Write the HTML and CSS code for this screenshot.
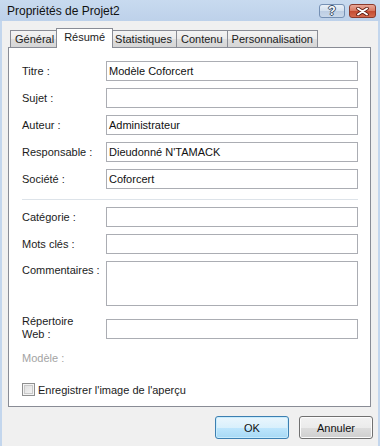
FILE: index.html
```html
<!DOCTYPE html>
<html lang="fr">
<head>
    <meta charset="UTF-8">
    <title>Propriétés de Projet2</title>
    <link rel="stylesheet" href="styles.css">
</head>
<body>
    <div class="window">
        <div class="titlebar">
            <span class="title">Propriétés de Projet2</span>
            <div class="caption-buttons">
                <span class="cap-btn help">?</span>
                <span class="cap-btn close">
                    <svg width="13" height="9" viewBox="0 0 13 9">
                        <path d="M2 1.5 L11 7.5 M11 1.5 L2 7.5" stroke="#5a1a10" stroke-width="3.6" stroke-linecap="round"/>
                        <path d="M2 1.5 L11 7.5 M11 1.5 L2 7.5" stroke="#ffffff" stroke-width="2" stroke-linecap="round"/>
                    </svg>
                </span>
            </div>
        </div>

        <div class="frame">
            <div class="tabs">
                <span class="tab">Général</span>
                <span class="tab active">Résumé</span>
                <span class="tab">Statistiques</span>
                <span class="tab">Contenu</span>
                <span class="tab">Personnalisation</span>
            </div>

            <div class="panel">
                <div class="form">
                    <label>Titre :</label>
                    <div class="field">Modèle Coforcert</div>
                    <label>Sujet :</label>
                    <div class="field"></div>
                    <label>Auteur :</label>
                    <div class="field">Administrateur</div>
                    <label>Responsable :</label>
                    <div class="field">Dieudonné N'TAMACK</div>
                    <label>Société :</label>
                    <div class="field">Coforcert</div>
                </div>

                <div class="separator"></div>

                <div class="form">
                    <label>Catégorie :</label>
                    <div class="field"></div>
                    <label>Mots clés :</label>
                    <div class="field"></div>
                    <label class="top">Commentaires :</label>
                    <div class="field area"></div>
                </div>

                <div class="form web-row">
                    <label class="two-lines">Répertoire<br>Web :</label>
                    <div class="field"></div>
                </div>

                <div class="disabled">Modèle :</div>

                <div class="check-row">
                    <span class="checkbox"></span>
                    <span>Enregistrer l'image de l'aperçu</span>
                </div>
            </div>

            <div class="buttons">
                <button class="btn default">OK</button>
                <button class="btn">Annuler</button>
            </div>
        </div>
    </div>
</body>
</html>
```

FILE: styles.css
```css
* {
    box-sizing: border-box;
}

body {
    margin: 0;
    font-family: "Liberation Sans", Arial, sans-serif;
    font-size: 11px;
    color: #1b1b1b;
}

.window {
    width: 380px;
    height: 446px;
    display: flex;
    flex-direction: column;
    background: #c3d6ed;
}

/* title bar */
.titlebar {
    height: 21px;
    display: flex;
    align-items: center;
    justify-content: space-between;
    padding: 0 4px 0 7px;
    background: linear-gradient(#c8daef, #bdd1ea);
}

.title {
    font-size: 12px;
    color: #111;
}

.caption-buttons {
    display: flex;
    gap: 4px;
    margin-top: 1px;
}

.cap-btn {
    width: 26px;
    height: 14px;
    border-radius: 3px;
    display: flex;
    align-items: center;
    justify-content: center;
}

.help {
    border: 1px solid #7590b4;
    background: linear-gradient(#e9f0f8, #d2dfee 50%, #bccde3 50%, #c9d8ea);
    color: #fff;
    font-weight: bold;
    font-size: 12px;
    text-shadow: 0 0 1px #3b4f6b, 1px 0 0 #3b4f6b, -1px 0 0 #3b4f6b, 0 1px 0 #3b4f6b, 0 -1px 0 #3b4f6b;
}

.close {
    width: 27px;
    border: 1px solid #8b3a2c;
    background: linear-gradient(#e8a899, #d8775f 50%, #c34a30 50%, #d46a4e);
}

/* frame */
.frame {
    flex: 1;
    margin: 0 2px;
    background: #f0f0f0;
}

.tabs {
    display: flex;
    align-items: flex-end;
    height: 19px;
    margin: 7px 0 0 6px;
    padding-left: 3px;
}

.tab {
    height: 17px;
    line-height: 16px;
    padding: 0 4px;
    margin-left: -1px;
    border: 1px solid #898c95;
    border-bottom: 0;
    background: linear-gradient(#f3f3f3, #ebebeb 50%, #dedede 50%, #d6d6d6);
    color: #1b1b1b;
}

.tab.active {
    height: 20px;
    line-height: 16px;
    padding: 0 7px;
    margin: 0 -2px -1px -3px;
    background: #fff;
    position: relative;
    z-index: 1;
}

.panel {
    height: 360px;
    margin: 0 7px 0 6px;
    border: 1px solid #898c95;
    background: #fff;
    padding: 13px 12px 0 13px;
}

.form {
    display: grid;
    grid-template-columns: 84px 1fr;
    row-gap: 7px;
    align-items: center;
}

.field {
    height: 20px;
    border: 1px solid #abadb3;
    padding: 0 2px;
    line-height: 18px;
    color: #111;
}

.field.area {
    height: 45px;
}

label.top {
    align-self: start;
    margin-top: 3px;
}

.separator {
    height: 1px;
    background: #dde3e9;
    margin: 10px 0 7px;
}

.web-row {
    margin-top: 10px;
}

.two-lines {
    line-height: 13px;
    align-self: start;
    margin-top: -1px;
}

.disabled {
    color: #a3a3a3;
    margin-top: 11px;
}

.check-row {
    display: flex;
    align-items: center;
    gap: 3px;
    margin-top: 19px;
}

.checkbox {
    width: 13px;
    height: 13px;
    border: 1px solid #8e8f8f;
    background: linear-gradient(135deg, #dcdcdc, #f6f6f6);
    box-shadow: inset 0 0 0 1px #f4f4f4, inset 0 0 0 2px #c9c9c9;
}

/* dialog buttons */
.buttons {
    display: flex;
    justify-content: flex-end;
    gap: 10px;
    margin: 9px 5px 0 0;
}

.btn {
    width: 74px;
    height: 23px;
    border: 1px solid #707070;
    border-radius: 3px;
    background: linear-gradient(#f2f2f2, #ebebeb 50%, #dddddd 50%, #cfcfcf);
    font-family: "Liberation Sans", Arial, sans-serif;
    font-size: 11px;
    color: #111;
    box-shadow: inset 0 0 0 1px #fcfcfc;
}

.btn.default {
    border-color: #3c7fb1;
    background: linear-gradient(#eaf6fd, #d9f0fc 50%, #bee6fd 50%, #a7d9f5);
    box-shadow: inset 0 0 0 1px #c8ecfd;
}
```
